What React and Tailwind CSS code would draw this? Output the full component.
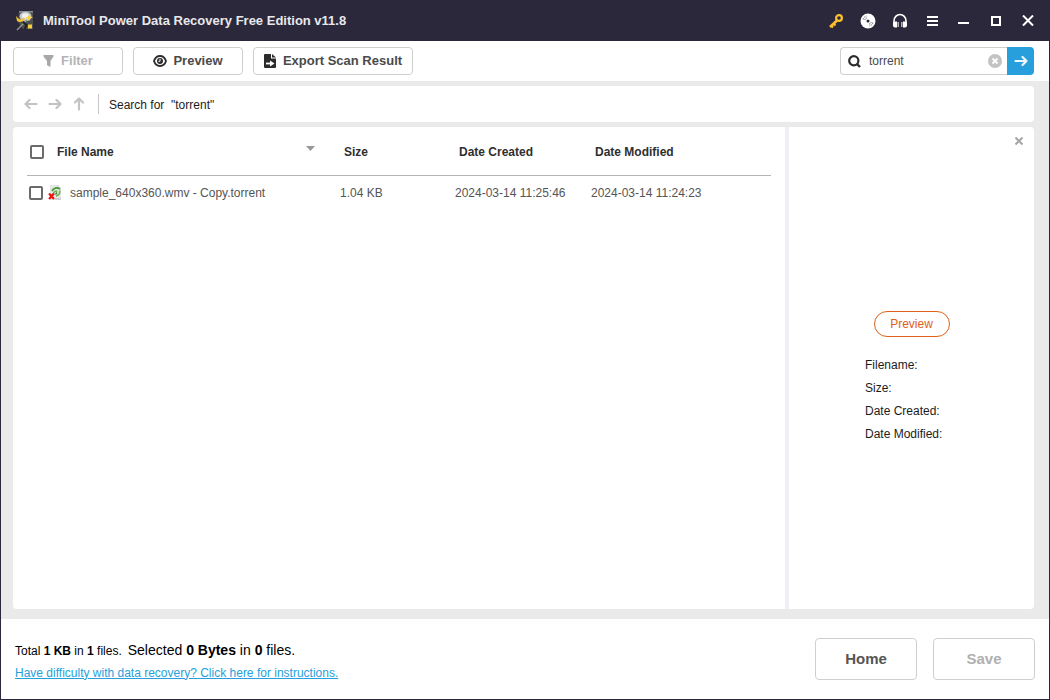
import clsx from 'clsx';

const files = [
  {
    id: 1,
    name: 'sample_640x360.wmv - Copy.torrent',
    size: '1.04 KB',
    created: '2024-03-14 11:25:46',
    modified: '2024-03-14 11:24:23',
  },
];

const details = ['Filename:', 'Size:', 'Date Created:', 'Date Modified:'];

/* Icons */

function AppLogo() {
  return (
    <svg width="20" height="22" viewBox="0 0 20 22" aria-hidden="true">
      <path d="M4 1h14v18H8L3 12z" fill="#4c4f50" />
      <path d="M4 1h14v1.500H4z" fill="#8b8e90" />
      <ellipse cx="10.500" cy="6.500" rx="6" ry="4.800" fill="#c3c8ca" />
      <ellipse cx="10.500" cy="6" rx="3.600" ry="2.800" fill="#f0f3f4" />
      <path d="M1 6l3 3c2 1 4 0 5-2l1 2c-2 3-5 4-8 2z" fill="#f4c430" />
      <path d="M14 4l1.200 2.500L18 7.500l-2.500 1L14 11l-1-2.500-2.500-1L13 6.500z" fill="#ffd23c" />
      <path d="M12 10L2 20" stroke="#8d9492" strokeWidth="1.400" />
      <path d="M8 12l3.500 3-2 4" stroke="#1f2122" strokeWidth="2" fill="none" />
      <rect x="13" y="14.500" width="4" height="4" fill="#f5cf3c" />
    </svg>
  );
}

function KeyIcon() {
  return (
    <svg width="15" height="15" viewBox="0 0 15 15" fill="none" stroke="#fbc02d" aria-hidden="true">
      <circle cx="10" cy="4" r="2.900" strokeWidth="2.200" />
      <path d="M8 6.500L1 13" strokeWidth="2.600" />
      <path d="M4.500 9.500l2 2M2 11.500l2 2" strokeWidth="2" />
    </svg>
  );
}

function DiscIcon() {
  return (
    <svg width="16" height="16" viewBox="0 0 16 16" aria-hidden="true">
      <circle cx="8" cy="8" r="7.500" fill="#fff" />
      <circle cx="8" cy="8" r="1.500" fill="#2a283a" />
      <path d="M3 6.500A5.500 5.500 0 0 1 6.500 3M4.800 7A3.500 3.500 0 0 1 7 4.800M13 9.500A5.500 5.500 0 0 1 9.500 13M11.200 9A3.500 3.500 0 0 1 9 11.200" fill="none" stroke="#2a283a" strokeWidth="0.700" strokeDasharray="1.500 0.700" />
    </svg>
  );
}

function HeadsetIcon() {
  return (
    <svg width="16" height="16" viewBox="0 0 16 16" aria-hidden="true">
      <path d="M2 11V8a6 6.500 0 0 1 12 0v3" fill="none" stroke="#fff" strokeWidth="1.600" />
      <path d="M5 8.500v6H3a2 2 0 0 1-2-2v-2a2 2 0 0 1 2-2zM11 8.500v6H13a2 2 0 0 0 2-2v-2a2 2 0 0 0-2-2z" fill="#fff" />
      <path d="M6.200 9v5M9.800 9v5" stroke="#bdbcc4" strokeWidth="1.400" />
    </svg>
  );
}

function MenuIcon() {
  return (
    <svg width="11" height="11" viewBox="0 0 11 11" fill="#fff" aria-hidden="true">
      <path d="M0 0h11v2H0zM0 4h11v2H0zM0 8h11v2H0z" />
    </svg>
  );
}

function MinimizeIcon() {
  return (
    <svg width="12" height="10" viewBox="0 0 12 10" fill="#fff" aria-hidden="true">
      <path d="M0 6h11v2H0z" />
    </svg>
  );
}

function MaximizeIcon() {
  return (
    <svg width="10" height="10" viewBox="0 0 10 10" aria-hidden="true">
      <rect x="1" y="1" width="8" height="8" fill="none" stroke="#fff" strokeWidth="2" />
    </svg>
  );
}

function CloseIcon() {
  return (
    <svg width="12" height="12" viewBox="0 0 12 12" aria-hidden="true">
      <path d="M1 0.500l10 10M11 0.500l-10 10" stroke="#fff" strokeWidth="2" />
    </svg>
  );
}

function FilterIcon() {
  return (
    <svg width="12" height="12" viewBox="0 0 12 12" fill="#a8a8a8" aria-hidden="true">
      <path d="M0.500 0h10v1.500L7.500 6v5.500H6L4 10V6L0.500 1.500z" />
    </svg>
  );
}

function EyeIcon() {
  return (
    <svg width="14" height="12" viewBox="0 0 14 12" fill="none" stroke="#2c2c2c" aria-hidden="true">
      <path d="M1 6c1-3 3.500-5 6-5s5 2 6 5c-1 3-3.500 5-6 5S2 9 1 6z" strokeWidth="1.900" />
      <circle cx="7" cy="6" r="3" fill="#2c2c2c" stroke="none" />
      <path d="M7 4v2.300H5.500" stroke="#fff" strokeWidth="1" />
    </svg>
  );
}

function ExportIcon() {
  return (
    <svg width="13" height="14" viewBox="0 0 13 14" aria-hidden="true">
      <path d="M0 1a1 1 0 0 1 1-1h6v4.500h5V13a1 1 0 0 1-1 1H1a1 1 0 0 1-1-1z" fill="#2c2c2c" />
      <path d="M8 0l4 3.500H8z" fill="#2c2c2c" />
      <path d="M2 9.500h5" fill="none" stroke="#fff" strokeWidth="1.800" />
      <path d="M6 6.500L10.500 9.500 6 12.500z" fill="#fff" />
    </svg>
  );
}

function SearchIcon() {
  return (
    <svg width="13" height="13" viewBox="0 0 13 13" fill="none" stroke="#2c2c2c" aria-hidden="true">
      <circle cx="5.800" cy="5.800" r="4.600" strokeWidth="2.200" />
      <path d="M8.500 8.500l3.500 3.500" strokeWidth="2.400" />
    </svg>
  );
}

function ClearIcon() {
  return (
    <svg width="14" height="14" viewBox="0 0 14 14" className="block" aria-hidden="true">
      <circle cx="7" cy="7" r="7" fill="#c3c3c3" />
      <path d="M4.500 4.500l5 5M9.500 4.500l-5 5" stroke="#fff" strokeWidth="2" />
    </svg>
  );
}

function ArrowIcon({ className }) {
  return (
    <svg width="14" height="12" viewBox="0 0 14 12" fill="none" stroke="currentColor" strokeWidth="2.200" strokeLinecap="round" strokeLinejoin="round" className={className} aria-hidden="true">
      <path d="M1.500 6h11M8.500 2l4 4-4 4" />
    </svg>
  );
}

function TorrentIcon() {
  return (
    <svg width="14" height="16" viewBox="0 0 14 16" className="shrink-0" aria-hidden="true">
      <path d="M2 0h8l3 3v12H2z" fill="#e6e6e6" />
      <path d="M10 0v3h3" fill="#f6f6f6" stroke="#bbb" strokeWidth="0.600" />
      <path d="M4 6c1.500-3 5-4 8-2" fill="none" stroke="#3f9b2f" strokeWidth="1.700" />
      <path d="M5.500 8.500c0.500-2 2.500-3 4-2M12 5.500c0 3-1.500 5-4 5.500" fill="none" stroke="#63b446" strokeWidth="1.500" />
      <path d="M9 7.500l-1.500 2" stroke="#2e7d22" strokeWidth="1.300" />
      <path d="M7 14h6" stroke="#b5b5b5" />
      <path d="M1 8.500l5 5.500M6 8.500L1 14" stroke="#f01212" strokeWidth="2.200" />
    </svg>
  );
}

/* Controls */

const titleButtons = [
  { icon: KeyIcon, label: 'Register' },
  { icon: DiscIcon, label: 'Bootable media' },
  { icon: HeadsetIcon, label: 'Support' },
  { icon: MenuIcon, label: 'Menu' },
  { icon: MinimizeIcon, label: 'Minimize' },
  { icon: MaximizeIcon, label: 'Maximize' },
  { icon: CloseIcon, label: 'Close' },
];

function ToolButton({ icon: Icon, label, wide, disabled }) {
  return (
    <button
      disabled={disabled}
      className={clsx(
        'h-7 flex items-center justify-center gap-1.5 rounded border border-[#cfcfcf] bg-white text-[13px] font-bold whitespace-nowrap',
        wide ? 'w-40' : 'w-[110px]',
        disabled ? 'text-[#b4b4b4]' : 'text-[#4a4a4a]'
      )}
    >
      <Icon />
      {label}
    </button>
  );
}

function Checkbox({ label }) {
  return (
    <input
      type="checkbox"
      aria-label={label}
      className="block size-3.5 shrink-0 appearance-none rounded-xs border-2 border-[#6b6b6b] bg-white checked:bg-[#269fdc]"
    />
  );
}

function TitleBar() {
  return (
    <header className="h-10 shrink-0 flex items-center justify-between bg-[#2a283a] pl-3.5 pr-[5px]">
      <div className="flex items-center gap-2">
        <AppLogo />
        <h1 className="text-[13px] font-bold text-[#e8e8ec]">MiniTool Power Data Recovery Free Edition v11.8</h1>
      </div>
      <div className="flex">
        {titleButtons.map(({ icon: Icon, label }) => (
          <button key={label} aria-label={label} className="size-8 flex items-center justify-center">
            <Icon />
          </button>
        ))}
      </div>
    </header>
  );
}

function Toolbar() {
  return (
    <div className="h-10 shrink-0 flex items-center justify-between bg-white pl-3 pr-[15px]">
      <div className="flex gap-2.5">
        <ToolButton icon={FilterIcon} label="Filter" disabled />
        <ToolButton icon={EyeIcon} label="Preview" />
        <ToolButton icon={ExportIcon} label="Export Scan Result" wide />
      </div>
      <form className="flex h-7" onSubmit={(e) => e.preventDefault()}>
        <div className="w-[167px] flex items-center rounded-l border border-r-0 border-[#cfcfcf] pl-[7px] pr-[5px]">
          <SearchIcon />
          <input
            type="text"
            aria-label="Search files"
            defaultValue="torrent"
            className="min-w-0 flex-1 ml-2 text-xs text-[#4a4a4a] outline-none"
          />
          <button type="button" aria-label="Clear search">
            <ClearIcon />
          </button>
        </div>
        <button aria-label="Search" className="w-[27px] flex items-center justify-center rounded-r bg-[#269fdc] text-[#eef7fc]">
          <ArrowIcon />
        </button>
      </form>
    </div>
  );
}

function Breadcrumb() {
  return (
    <nav className="h-9 shrink-0 flex items-center rounded bg-white px-[11px] text-[#c3c3c3]">
      <div className="flex gap-2.5">
        <button aria-label="Back"><ArrowIcon className="rotate-180" /></button>
        <button aria-label="Forward"><ArrowIcon /></button>
        <button aria-label="Up"><ArrowIcon className="-rotate-90" /></button>
      </div>
      <div className="ml-3 h-5 w-px bg-[#c8c8c8]" />
      <p className="ml-2.5 pt-px text-xs text-[#1c1c1c] whitespace-pre">Search for  "torrent"</p>
    </nav>
  );
}

function FileTable() {
  return (
    <div className="min-w-0 flex-1 px-3.5">
      <table className="w-full table-fixed text-left text-xs text-[#555]">
        <colgroup>
          <col className="w-[313px]" />
          <col className="w-[115px]" />
          <col className="w-[136px]" />
          <col />
        </colgroup>
        <thead className="text-[#2f2f2f]">
          <tr className="h-12 border-b border-[#b5b5b5]">
            <th className="pl-[3px] pr-[25px] pt-0.5">
              <div className="flex items-center">
                <Checkbox label="Select all files" />
                <span className="ml-[13px]">File Name</span>
                <svg width="9" height="5" viewBox="0 0 9 5" fill="#999" className="ml-auto mb-1.5" aria-hidden="true">
                  <path d="M0 0h9L4.500 5z" />
                </svg>
              </div>
            </th>
            <th className="pl-1 pt-0.5">Size</th>
            <th className="pl-1 pt-0.5">Date Created</th>
            <th className="pl-1 pt-0.5">Date Modified</th>
          </tr>
        </thead>
        <tbody>
          {files.map((file) => (
            <tr key={file.id} className="h-9">
              <td className="pl-0.5">
                <div className="flex items-center">
                  <Checkbox label={`Select ${file.name}`} />
                  <span className="ml-[5px] mr-2"><TorrentIcon /></span>
                  <span>{file.name}</span>
                </div>
              </td>
              <td>{file.size}</td>
              <td>{file.created}</td>
              <td>{file.modified}</td>
            </tr>
          ))}
        </tbody>
      </table>
    </div>
  );
}

function PreviewPane() {
  return (
    <aside className="w-[249px] shrink-0 flex flex-col border-l-4 border-[#eff0f4]">
      <button aria-label="Close preview" className="self-end mt-2.5 mr-2.5">
        <svg width="10" height="8" viewBox="0 0 10 8" className="block" aria-hidden="true">
          <path d="M1.500 0.500l7 7M8.500 0.500l-7 7" stroke="#a5a5a5" strokeWidth="2" />
        </svg>
      </button>
      <div className="mt-[166px] px-[76px]">
        <button className="block mx-auto h-[26px] w-[76px] rounded-full border border-[#e0601a] text-xs text-[#e0601a]">
          Preview
        </button>
        <ul className="mt-[17px] text-xs leading-[23px] text-[#1c1c1c] whitespace-nowrap">
          {details.map((label) => (
            <li key={label}>{label}</li>
          ))}
        </ul>
      </div>
    </aside>
  );
}

function Footer() {
  return (
    <footer className="h-20 shrink-0 flex items-center justify-between bg-white px-3.5">
      <div className="pt-0.5 text-xs text-black">
        <p className="flex items-baseline gap-1.5 leading-6">
          <span>Total <b>1 KB</b> in <b>1</b> files.</span>
          <span className="text-sm leading-6">Selected <b>0 Bytes</b> in <b>0</b> files.</span>
        </p>
        <a href="#help" className="block leading-5 text-[#269fdc] underline">
          Have difficulty with data recovery? Click here for instructions.
        </a>
      </div>
      <div className="flex gap-4 text-[15px] font-bold">
        <button className="h-[42px] w-[102px] rounded border border-[#cfcfcf] text-[#555]">Home</button>
        <button disabled className="h-[42px] w-[102px] rounded border border-[#cfcfcf] text-[#b0b0b0]">Save</button>
      </div>
    </footer>
  );
}

export default function App() {
  return (
    <div className="min-h-screen flex flex-col border border-[#2a283a] bg-white font-['Liberation_Sans',Arial,sans-serif]">
      <TitleBar />
      <Toolbar />
      <main className="flex-1 flex flex-col gap-[5px] bg-[#eaeaea] pt-[5px] pb-2.5 pl-3 pr-[15px]">
        <Breadcrumb />
        <div className="flex-1 flex overflow-hidden rounded bg-white">
          <FileTable />
          <PreviewPane />
        </div>
      </main>
      <Footer />
    </div>
  );
}
